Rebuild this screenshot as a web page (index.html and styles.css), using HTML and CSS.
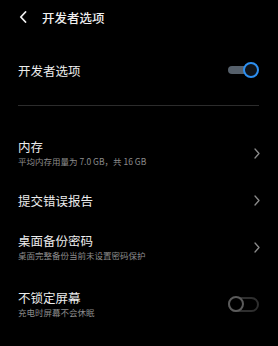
FILE: index.html
```html
<!DOCTYPE html>
<html lang="zh-CN">
<head>
  <meta charset="UTF-8" />
  <meta name="viewport" content="width=device-width, initial-scale=1.0"/>
  <title>开发者选项</title>
  <link rel="stylesheet" href="styles.css">
</head>
<body>
  <header class="topbar">
    <svg class="back" width="8" height="12" viewBox="0 0 8 12">
      <path d="M6.5 1 L1.8 6 L6.5 11" fill="none" stroke="#f0f0f0" stroke-width="1.8" stroke-linecap="round" stroke-linejoin="round"/>
    </svg>
    <span class="page-title">开发者选项</span>
  </header>

  <div class="row main-row">
    <div class="text">
      <div class="title">开发者选项</div>
    </div>
    <div class="switch on"><span class="knob"></span></div>
  </div>

  <div class="divider"></div>

  <div class="row item first">
    <div class="text">
      <div class="title">内存</div>
      <div class="sub">平均内存用量为 7.0 GB，共 16 GB</div>
    </div>
    <svg class="chev" width="6" height="11" viewBox="0 0 6 11">
      <path d="M1 1 L5 5.5 L1 10" fill="none" stroke="#8a8a8a" stroke-width="1.3" stroke-linecap="round" stroke-linejoin="round"/>
    </svg>
  </div>

  <div class="row item">
    <div class="text">
      <div class="title">提交错误报告</div>
    </div>
    <svg class="chev" width="6" height="11" viewBox="0 0 6 11">
      <path d="M1 1 L5 5.5 L1 10" fill="none" stroke="#8a8a8a" stroke-width="1.3" stroke-linecap="round" stroke-linejoin="round"/>
    </svg>
  </div>

  <div class="row item">
    <div class="text">
      <div class="title">桌面备份密码</div>
      <div class="sub">桌面完整备份当前未设置密码保护</div>
    </div>
    <svg class="chev" width="6" height="11" viewBox="0 0 6 11">
      <path d="M1 1 L5 5.5 L1 10" fill="none" stroke="#8a8a8a" stroke-width="1.3" stroke-linecap="round" stroke-linejoin="round"/>
    </svg>
  </div>

  <div class="row item spaced">
    <div class="text">
      <div class="title">不锁定屏幕</div>
      <div class="sub">充电时屏幕不会休眠</div>
    </div>
    <div class="switch off"><span class="knob"></span></div>
  </div>
</body>
</html>
```

FILE: styles.css
```css
body {
  margin: 0;
  background: #000;
  color: #ececec;
  font-family: "Noto Sans CJK SC", "Noto Sans", sans-serif;
  width: 278px;
  height: 346px;
  overflow: hidden;
}

.topbar {
  height: 34px;
  display: flex;
  align-items: center;
  padding-left: 18px;
}

.back {
  margin-left: 1px;
  margin-right: 15px;
}

.page-title {
  font-size: 12.5px;
  font-weight: 500;
  color: #f0f0f0;
}

.row {
  display: flex;
  align-items: center;
  justify-content: space-between;
  height: 40px;
  padding: 0 19px 0 18px;
}

.main-row {
  margin-top: 16px;
}

.title {
  font-size: 12.5px;
  line-height: 17px;
  color: #ececec;
}

.sub {
  font-size: 8.5px;
  line-height: 13px;
  color: #8c8c8c;
}

.divider {
  height: 1px;
  background: #2c2c2c;
  margin: 15px 19px 0 18px;
}

.item {
  margin-top: 7px;
}

.item.first {
  margin-top: 27px;
}

.item.spaced {
  margin-top: 17px;
}

.chev {
  margin-right: -1px;
}

.switch {
  position: relative;
  width: 31px;
  height: 17px;
}

.switch.on::before {
  content: "";
  position: absolute;
  left: 0;
  top: 4.5px;
  width: 24px;
  height: 8px;
  border-radius: 4px;
  background: #56606b;
}

.switch.on .knob {
  position: absolute;
  right: 0;
  top: 0;
  width: 12px;
  height: 12px;
  border: 2.5px solid #2d8ff0;
  border-radius: 50%;
  background: #0e1217;
}

.switch.off::before {
  content: "";
  position: absolute;
  left: 0;
  top: 1px;
  width: 27px;
  height: 11px;
  border: 2px solid #2e2e2e;
  border-radius: 8px;
}

.switch.off .knob {
  position: absolute;
  left: 0;
  top: 0;
  width: 12px;
  height: 12px;
  border: 2.5px solid #5a5a5a;
  border-radius: 50%;
  background: #000;
}
```
